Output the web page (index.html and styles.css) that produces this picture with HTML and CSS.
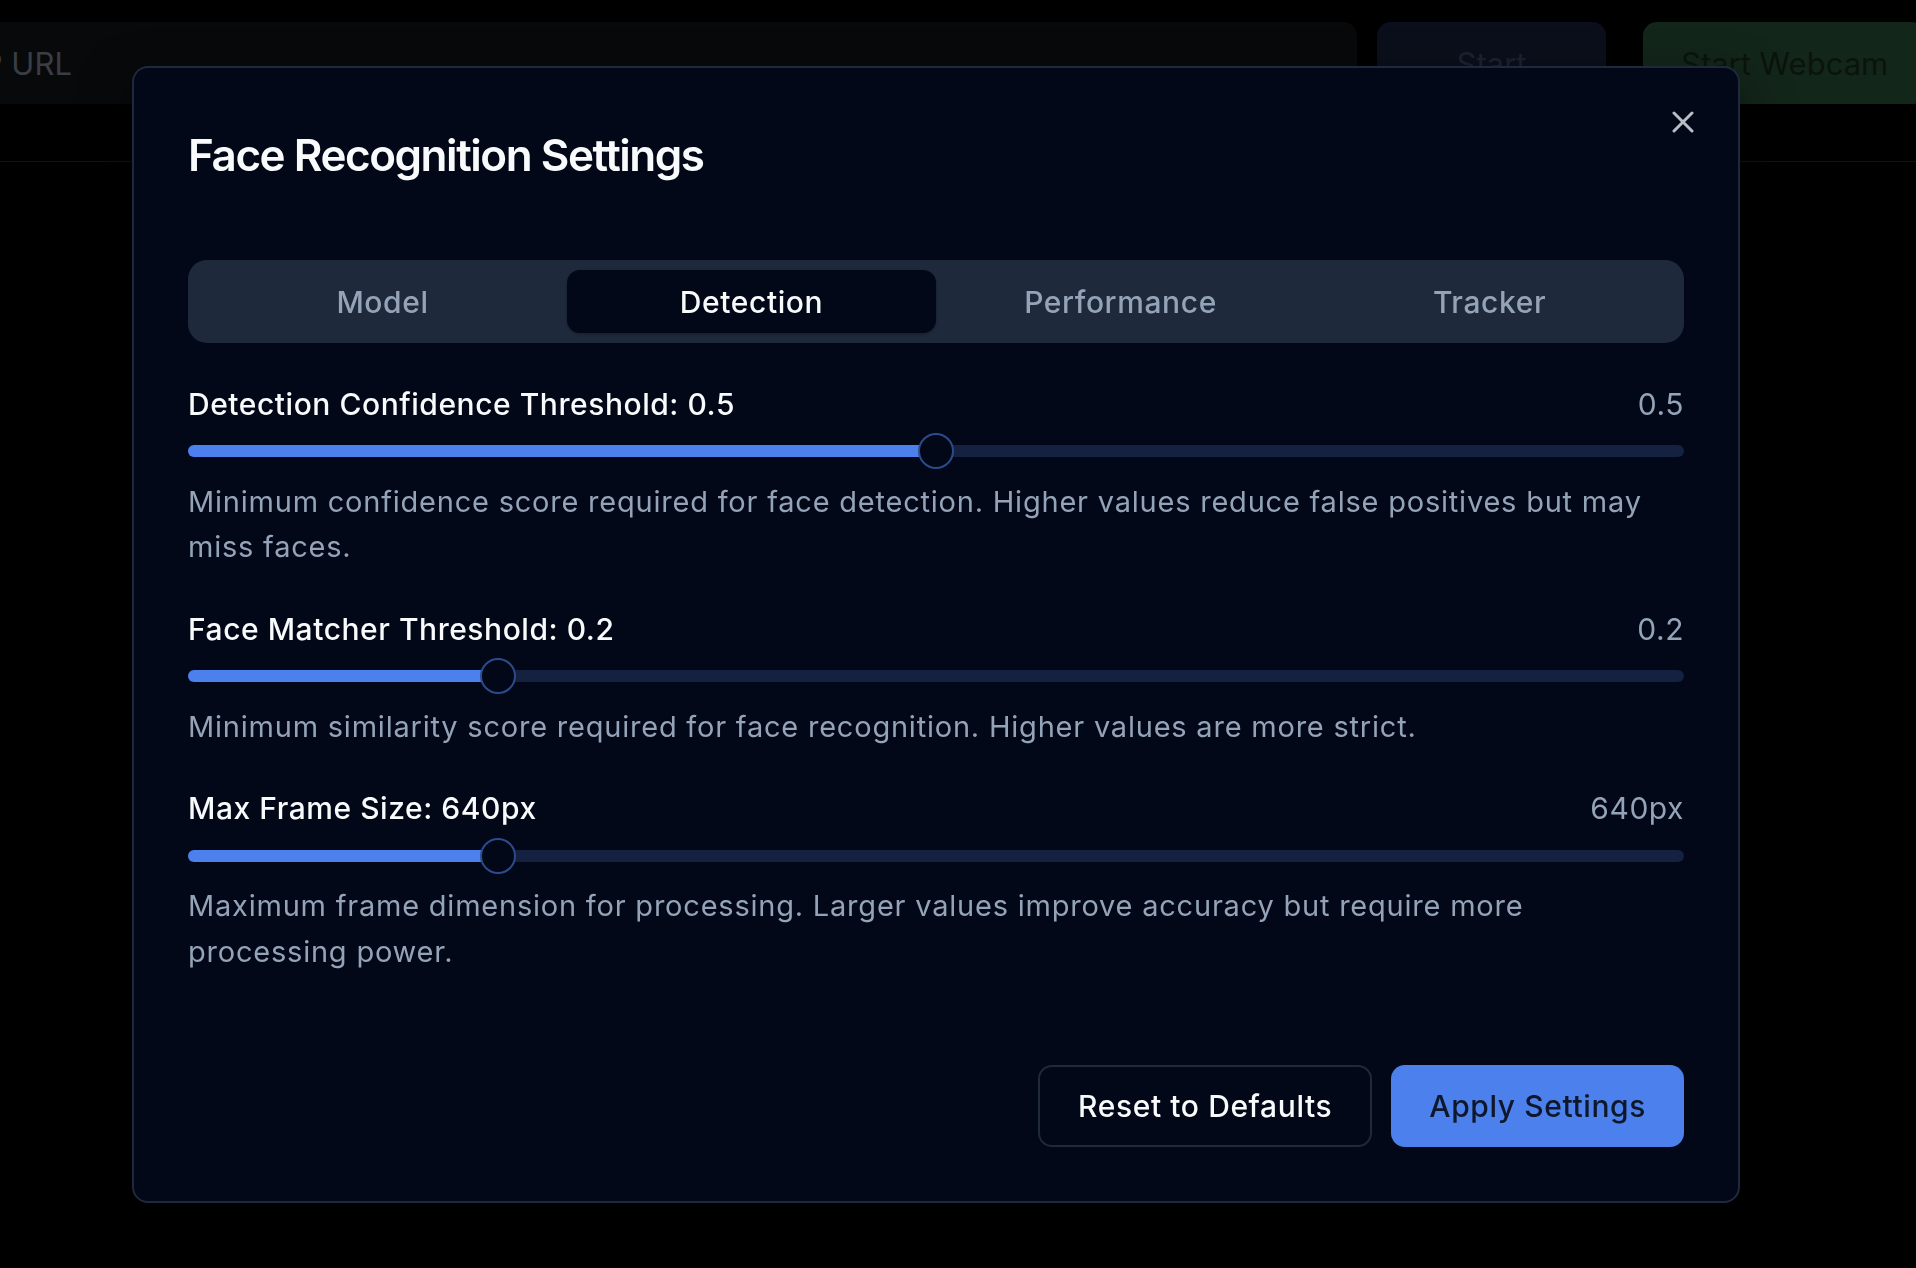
FILE: index.html
```html
<!DOCTYPE html>
<html lang="en">
<head>
    <meta charset="UTF-8">
    <meta name="viewport" content="width=device-width, initial-scale=1.0">
    <title>Face Recognition Settings</title>
    <link rel="stylesheet" href="styles.css">
</head>
<body>
    <header class="toolbar">
        <div class="url-input">RTSP URL</div>
        <button class="btn-start">Start</button>
        <button class="btn-webcam">Start Webcam</button>
    </header>

    <div class="overlay">
        <div class="dialog" role="dialog" aria-labelledby="dialog-title">
            <button class="dialog-close" aria-label="Close">
                <svg viewBox="0 0 22 22" width="22" height="22" fill="none" stroke="currentColor" stroke-width="3" stroke-linecap="round">
                    <path d="M2 2 L20 20 M20 2 L2 20"/>
                </svg>
            </button>

            <h2 class="dialog-title" id="dialog-title">Face Recognition Settings</h2>

            <div class="tabs">
                <button class="tab">Model</button>
                <button class="tab active">Detection</button>
                <button class="tab">Performance</button>
                <button class="tab">Tracker</button>
            </div>

            <div class="settings">
                <div class="setting">
                    <div class="setting-head">
                        <label class="setting-label">Detection Confidence Threshold: 0.5</label>
                        <span class="setting-value">0.5</span>
                    </div>
                    <div class="slider">
                        <div class="slider-track"><div class="slider-range" style="width: 50%"></div></div>
                        <span class="slider-thumb" style="left: calc(50% - 18px)"></span>
                    </div>
                    <p class="setting-desc">Minimum confidence score required for face detection. Higher values reduce false positives but may miss faces.</p>
                </div>

                <div class="setting">
                    <div class="setting-head">
                        <label class="setting-label">Face Matcher Threshold: 0.2</label>
                        <span class="setting-value">0.2</span>
                    </div>
                    <div class="slider">
                        <div class="slider-track"><div class="slider-range" style="width: 20%"></div></div>
                        <span class="slider-thumb" style="left: calc(20% - 7.2px)"></span>
                    </div>
                    <p class="setting-desc">Minimum similarity score required for face recognition. Higher values are more strict.</p>
                </div>

                <div class="setting">
                    <div class="setting-head">
                        <label class="setting-label">Max Frame Size: 640px</label>
                        <span class="setting-value">640px</span>
                    </div>
                    <div class="slider">
                        <div class="slider-track"><div class="slider-range" style="width: 20%"></div></div>
                        <span class="slider-thumb" style="left: calc(20% - 7.2px)"></span>
                    </div>
                    <p class="setting-desc">Maximum frame dimension for processing. Larger values improve accuracy but require more processing power.</p>
                </div>
            </div>

            <div class="dialog-footer">
                <button class="btn btn-outline">Reset to Defaults</button>
                <button class="btn btn-primary">Apply Settings</button>
            </div>
        </div>
    </div>
</body>
</html>
```

FILE: styles.css
```css
:root {
    --background: #020817;
    --border: #1e293b;
    --muted: #1e293b;
    --muted-foreground: #94a3b8;
    --foreground: #f8fafc;
    --primary: #4c80ec;
    --primary-foreground: #0f172a;
}

* {
    box-sizing: border-box;
}

body {
    margin: 0;
    width: 1916px;
    height: 1268px;
    overflow: hidden;
    background: #000;
    font-family: Inter, "Noto Sans", sans-serif;
    color: var(--foreground);
}

button {
    font-family: inherit;
    cursor: pointer;
}

/* page behind the dialog (dimmed) */
.toolbar {
    display: flex;
    align-items: flex-start;
    height: 162px;
    padding-top: 22px;
    border-bottom: 1px solid #121315;
}

.url-input {
    flex-shrink: 0;
    margin-left: -101px;
    width: 1458px;
    height: 82px;
    padding-left: 24px;
    display: flex;
    align-items: center;
    background: #08090b;
    border-radius: 14px;
    color: #3a3d44;
    font-size: 31px;
}

.btn-start {
    flex-shrink: 0;
    margin-left: 20px;
    width: 229px;
    height: 82px;
    border: none;
    border-radius: 14px;
    background: #0a0f1b;
    color: #1c2230;
    font-size: 31px;
}

.btn-webcam {
    flex-shrink: 0;
    margin-left: 37px;
    height: 82px;
    padding: 0 38px;
    border: none;
    border-radius: 14px;
    background: #13261a;
    color: #0a140d;
    font-size: 31px;
    white-space: nowrap;
}

/* dialog */
.overlay {
    position: fixed;
    inset: 0;
    display: flex;
    align-items: flex-start;
    padding: 66px 0 0 132px;
}

.dialog {
    position: relative;
    width: 1608px;
    padding: 54px;
    background: var(--background);
    border: 2px solid var(--border);
    border-radius: 16px;
    box-shadow: 0 20px 50px rgba(0, 0, 0, 0.5);
}

.dialog-close {
    position: absolute;
    top: 43px;
    right: 44px;
    width: 22px;
    height: 22px;
    padding: 0;
    border: none;
    background: none;
    color: #babec6;
}

.dialog-close svg {
    display: block;
}

.dialog-title {
    margin: 0;
    font-size: 44px;
    line-height: 66px;
    font-weight: 600;
    letter-spacing: -0.033em;
}

.tabs {
    margin-top: 72px;
    display: grid;
    grid-template-columns: repeat(4, 1fr);
    height: 83px;
    padding: 10px;
    background: var(--muted);
    border-radius: 19px;
}

.tab {
    border: none;
    background: transparent;
    border-radius: 13px;
    color: var(--muted-foreground);
    font-size: 30px;
    font-weight: 500;
    letter-spacing: 0.02em;
}

.tab.active {
    background: var(--background);
    color: var(--foreground);
    box-shadow: 0 1px 3px rgba(0, 0, 0, 0.3);
}

.settings {
    margin-top: 40.5px;
    display: flex;
    flex-direction: column;
    gap: 39px;
}

.setting {
    display: flex;
    flex-direction: column;
    gap: 9.5px;
}

.setting-head {
    display: flex;
    justify-content: space-between;
    font-size: 30px;
    line-height: 40px;
    letter-spacing: 0.018em;
}

.setting-label {
    font-weight: 500;
}

.setting-value {
    color: var(--muted-foreground);
}

.slider {
    position: relative;
    height: 36px;
    display: flex;
    align-items: center;
}

.slider-track {
    width: 100%;
    height: 12px;
    border-radius: 6px;
    background: #142140;
    overflow: hidden;
}

.slider-range {
    height: 100%;
    background: var(--primary);
}

.slider-thumb {
    position: absolute;
    top: 0;
    width: 36px;
    height: 36px;
    border: 2.5px solid #2c4a8c;
    border-radius: 50%;
    background: var(--background);
}

.setting-desc {
    margin: 0;
    font-size: 29px;
    line-height: 45.6px;
    letter-spacing: 0.027em;
    color: var(--muted-foreground);
}

.dialog-footer {
    margin-top: 90.5px;
    display: flex;
    justify-content: flex-end;
    gap: 19px;
}

.btn {
    height: 82px;
    padding: 0 38px;
    border-radius: 14px;
    font-size: 30px;
    font-weight: 500;
    letter-spacing: 0.02em;
}

.btn-outline {
    background: var(--background);
    border: 2px solid var(--border);
    color: var(--foreground);
}

.btn-primary {
    background: var(--primary);
    border: none;
    color: var(--primary-foreground);
}
```
